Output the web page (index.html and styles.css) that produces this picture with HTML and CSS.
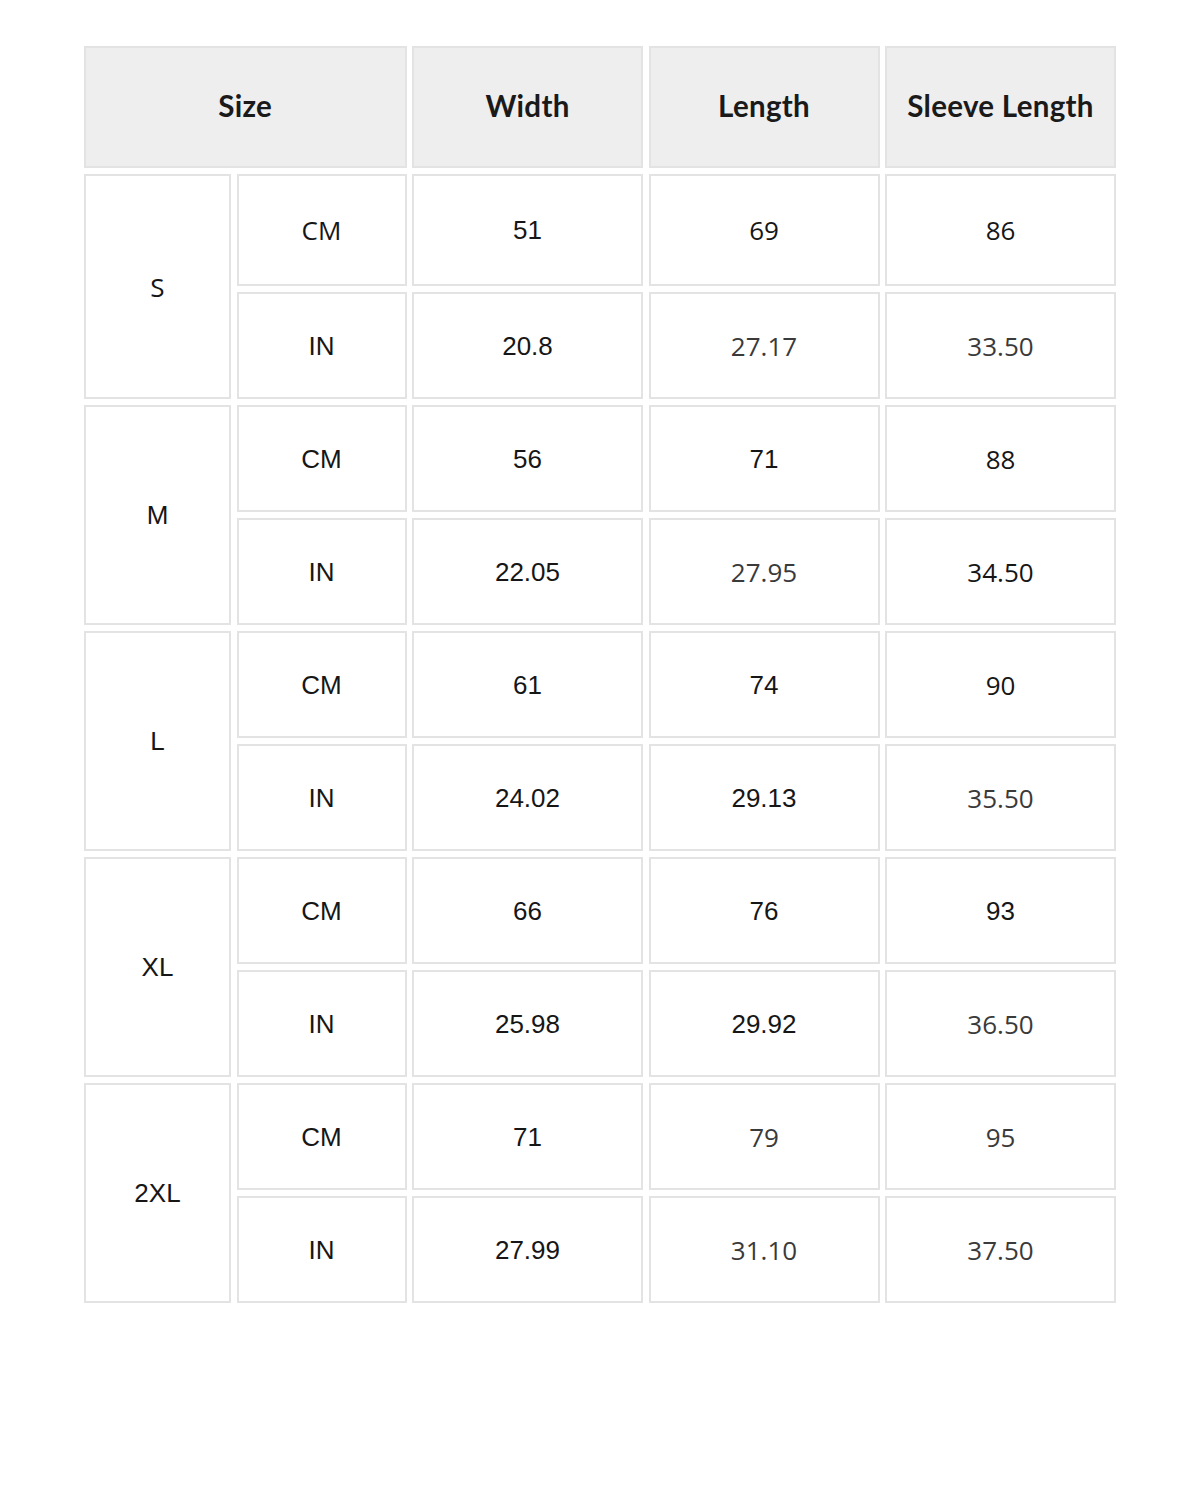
FILE: index.html
```html
<!DOCTYPE html>
<html lang="en">
<head>
<meta charset="utf-8">
<title>Size Chart</title>
<link rel="stylesheet" href="styles.css">
</head>
<body>
<div class="page">
  <div class="chart">
    <div class="cell head span2">Size</div>
    <div class="cell head">Width</div>
    <div class="cell head">Length</div>
    <div class="cell head">Sleeve Length</div>

    <div class="cell size o">S</div>
    <div class="cell o">CM</div>
    <div class="cell a">51</div>
    <div class="cell o">69</div>
    <div class="cell o">86</div>
    <div class="cell a">IN</div>
    <div class="cell a">20.8</div>
    <div class="cell o g">27.17</div>
    <div class="cell o g">33.50</div>

    <div class="cell size a">M</div>
    <div class="cell a">CM</div>
    <div class="cell a">56</div>
    <div class="cell a">71</div>
    <div class="cell o">88</div>
    <div class="cell a">IN</div>
    <div class="cell a">22.05</div>
    <div class="cell o g">27.95</div>
    <div class="cell o">34.50</div>

    <div class="cell size a">L</div>
    <div class="cell a">CM</div>
    <div class="cell a">61</div>
    <div class="cell a">74</div>
    <div class="cell o">90</div>
    <div class="cell a">IN</div>
    <div class="cell a">24.02</div>
    <div class="cell a">29.13</div>
    <div class="cell o g">35.50</div>

    <div class="cell size a">XL</div>
    <div class="cell a">CM</div>
    <div class="cell a">66</div>
    <div class="cell a">76</div>
    <div class="cell a">93</div>
    <div class="cell a">IN</div>
    <div class="cell a">25.98</div>
    <div class="cell a">29.92</div>
    <div class="cell o g">36.50</div>

    <div class="cell size a">2XL</div>
    <div class="cell a">CM</div>
    <div class="cell a">71</div>
    <div class="cell o g">79</div>
    <div class="cell o g">95</div>
    <div class="cell a">IN</div>
    <div class="cell a">27.99</div>
    <div class="cell o g">31.10</div>
    <div class="cell o g">37.50</div>
  </div>
</div>
</body>
</html>
```

FILE: styles.css
```css
html, body {
  margin: 0;
  padding: 0;
  background: #ffffff;
}

.page {
  padding: 46px 84px;
}

.chart {
  display: grid;
  grid-template-columns: 147px 170px 231px 231px 231px;
  grid-template-rows: 122px 112px repeat(9, 107px);
  column-gap: 5.5px;
  row-gap: 6px;
  width: 1032px;
}

.cell {
  box-sizing: border-box;
  border: 2px solid #e3e3e3;
  background: #ffffff;
  display: flex;
  align-items: center;
  justify-content: center;
  font-size: 26px;
  color: #161616;
  line-height: 1;
}

.head {
  background: #eeeeee;
  font-family: "Lato", "Open Sans", sans-serif;
  font-weight: 700;
  font-size: 29.5px;
  color: #1a1a1a;
  letter-spacing: 0.3px;
  padding-bottom: 2px;
}

.span2 {
  grid-column: span 2;
}

.size {
  grid-row: span 2;
}

.a {
  font-family: "Liberation Sans", Arial, sans-serif;
}

.o {
  font-family: "Open Sans", sans-serif;
}

.g {
  color: #3a3a3a;
}
```
